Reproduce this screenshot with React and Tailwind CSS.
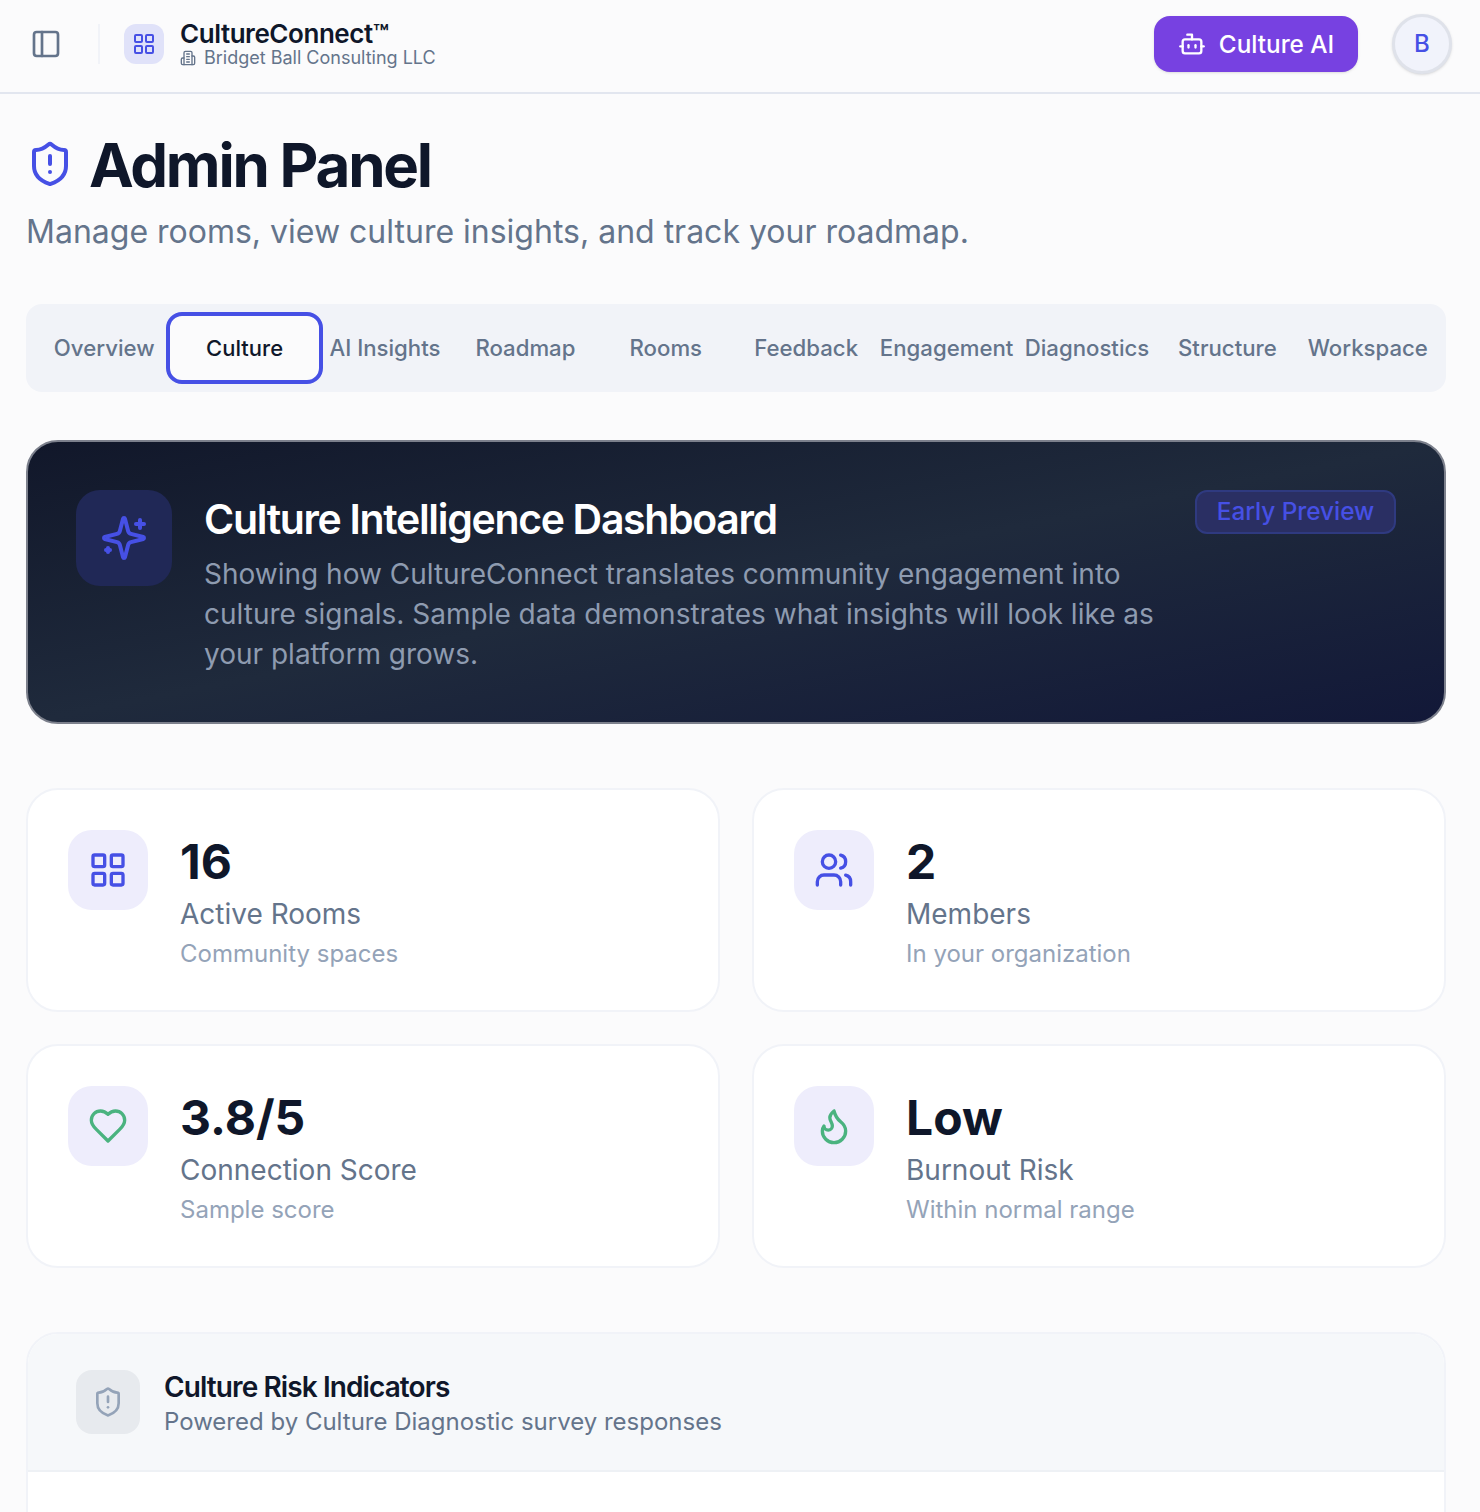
import React from "react";
import { PanelLeft, LayoutGrid, ShieldAlert, Bot, Users, Flame } from "lucide-react";

const tabs = ["Overview", "Culture", "AI Insights", "Roadmap", "Rooms", "Feedback", "Engagement", "Diagnostics", "Structure", "Workspace"];

function Ico({ className, children }) {
  return (
    <svg viewBox="0 0 24 24" fill="none" stroke="currentColor" strokeWidth="2" strokeLinecap="round" strokeLinejoin="round" className={className}>
      {children}
    </svg>
  );
}

function Sparkle({ className }) {
  return (
    <Ico className={className}>
      <path d="M9.937 15.5A2 2 0 0 0 8.5 14.063l-6.135-1.582a.5.5 0 0 1 0-.962L8.5 9.936A2 2 0 0 0 9.937 8.5l1.582-6.135a.5.5 0 0 1 .963 0L14.063 8.5A2 2 0 0 0 15.5 9.937l6.135 1.581a.5.5 0 0 1 0 .964L15.5 14.063a2 2 0 0 0-1.437 1.437l-1.582 6.135a.5.5 0 0 1-.963 0z" />
      <path d="M20 3v4" />
      <path d="M22 5h-4" />
      <path d="M4 17v2" />
      <path d="M5 18H3" />
    </Ico>
  );
}

function HeartIcon({ className }) {
  return (
    <Ico className={className}>
      <path d="M19 14c1.49-1.46 3-3.21 3-5.5A5.5 5.5 0 0 0 16.5 3c-1.76 0-3 .5-4.5 2-1.5-1.5-2.74-2-4.5-2A5.5 5.5 0 0 0 2 8.5c0 2.3 1.5 4.05 3 5.5l7 7Z" />
    </Ico>
  );
}

function BuildingIcon({ className }) {
  return (
    <Ico className={className}>
      <path d="M6 22V4a2 2 0 0 1 2-2h8a2 2 0 0 1 2 2v18Z" />
      <path d="M6 12H4a2 2 0 0 0-2 2v6a2 2 0 0 0 2 2h2" />
      <path d="M18 9h2a2 2 0 0 1 2 2v9a2 2 0 0 1-2 2h-2" />
      <path d="M10 6h4" />
      <path d="M10 10h4" />
      <path d="M10 14h4" />
      <path d="M10 18h4" />
    </Ico>
  );
}

function StatCard({ icon, value, label, sub }) {
  return (
    <div className="flex h-[224px] gap-8 rounded-[32px] border-2 border-[#f1f3f8] bg-white p-10">
      <div className="flex h-20 w-20 shrink-0 items-center justify-center rounded-3xl bg-[#eeedfc]">{icon}</div>
      <div className="flex flex-col">
        <div className="h-[64px] text-[48px] leading-[64px] font-bold text-[#0f172a]">{value}</div>
        <div className="text-[28px] leading-[41px] text-[#64748b]">{label}</div>
        <div className="text-[24px] leading-[38px] text-[#94a3b8]">{sub}</div>
      </div>
    </div>
  );
}

export default function App() {
  return (
    <div className="h-[1512px] overflow-hidden bg-[#fbfbfc] font-['Inter',sans-serif]">
      <header className="flex h-[94px] items-center justify-between border-b-2 border-[#e2e6ef] pr-7 pb-1 pl-[30px]">
        <div className="flex items-center">
          <PanelLeft className="h-8 w-8 text-[#64748b]" />
          <div className="mr-6 ml-9 h-10 w-0.5 bg-[#f1f3f8]" />
          <div className="flex h-10 w-10 items-center justify-center rounded-xl bg-[#e0e2f9]">
            <LayoutGrid className="h-6 w-6 text-[#4650e5]" />
          </div>
          <div className="ml-4 flex flex-col">
            <div className="text-[26px] leading-[28px] font-semibold tracking-[-0.45px] text-[#0f172a]">CultureConnect™</div>
            <div className="flex items-center gap-2 text-[18px] leading-[20px] text-[#64748b]">
              <BuildingIcon className="h-4 w-4" />
              Bridget Ball Consulting LLC
            </div>
          </div>
        </div>
        <div className="flex items-center gap-[34px]">
          <button className="flex h-14 w-[204px] items-center justify-center gap-[13px] rounded-2xl bg-[#7741e1] text-[24.3px] font-medium text-white shadow-sm">
            <Bot className="h-7 w-7" />
            Culture AI
          </button>
          <div className="flex h-[60px] w-[60px] items-center justify-center rounded-full border-[3px] border-[#dfe2ea] bg-[#f1f3fb] text-[24px] font-medium text-[#4650e5] shadow-sm">B</div>
        </div>
      </header>

      <main className="pr-[34px] pl-[26px]">
        <div className="mt-9 flex items-center gap-[15px]">
          <ShieldAlert className="mb-0.5 h-12 w-12 text-[#4650e5]" />
          <h1 className="text-[60px] leading-[70px] font-bold tracking-[-2.2px] text-[#0f172a]">Admin Panel</h1>
        </div>
        <p className="mt-3 text-[32px] leading-[40px] text-[#64748b]">Manage rooms, view culture insights, and track your roadmap.</p>

        <nav className="mt-[52px] grid h-[88px] grid-cols-10 rounded-2xl bg-[#f1f3f8] p-2">
          {tabs.map((t) =>
            t === "Culture" ? (
              <div key={t} className="z-10 mx-[-8px] flex items-center justify-center rounded-2xl border-4 border-[#4650e5] bg-[#fbfbfc] text-[22px] font-medium text-[#0f172a]">{t}</div>
            ) : (
              <div key={t} className="flex items-center justify-center whitespace-nowrap text-[22.2px] font-medium text-[#64748b]">{t}</div>
            )
          )}
        </nav>

        <section className="mt-12 flex h-[284px] items-start gap-8 rounded-[32px] border-2 border-[#7c808c] bg-[linear-gradient(to_bottom_right,#11172a_0%,#1f2a3c_50%,#121838_100%)] p-12">
          <div className="flex h-24 w-24 shrink-0 items-center justify-center rounded-3xl bg-[#202856]">
            <Sparkle className="h-12 w-12 text-[#4650e5]" />
          </div>
          <div className="flex-1">
            <h2 className="text-[41px] leading-[58px] font-semibold tracking-[-1.33px] text-white">Culture Intelligence Dashboard</h2>
            <p className="mt-[6px] text-[28px] leading-[40px] text-[#8e9bb0]">Showing how CultureConnect translates community engagement into culture signals. Sample data demonstrates what insights will look like as your platform grows.</p>
          </div>
          <div className="flex h-11 w-[201px] shrink-0 items-center justify-center rounded-xl border-2 border-[#2f3a80] bg-[#2a2f63] pb-0.5 text-[24.3px] font-medium text-[#4650e5]">Early Preview</div>
        </section>

        <div className="mt-16 grid grid-cols-2 gap-8">
          <StatCard icon={<LayoutGrid className="h-10 w-10 text-[#4650e5]" />} value="16" label="Active Rooms" sub="Community spaces" />
          <StatCard icon={<Users className="h-10 w-10 text-[#4650e5]" />} value="2" label="Members" sub="In your organization" />
          <StatCard icon={<HeartIcon className="h-10 w-10 text-[#4ab37f]" />} value="3.8/5" label="Connection Score" sub="Sample score" />
          <StatCard icon={<Flame className="h-10 w-10 text-[#4ab37f]" />} value="Low" label="Burnout Risk" sub="Within normal range" />
        </div>

        <section className="mt-16 overflow-hidden rounded-[32px] border-2 border-[#f1f3f8] bg-white">
          <div className="flex h-[138px] items-center gap-6 border-b-2 border-[#eef1f5] bg-[#f6f8fa] pl-12">
            <div className="flex h-16 w-16 items-center justify-center rounded-2xl bg-[#e7eaee]">
              <ShieldAlert className="h-8 w-8 text-[#94a3b8]" />
            </div>
            <div className="flex flex-col pt-1">
              <div className="text-[28px] leading-[36px] font-semibold tracking-[-0.9px] text-[#0f172a]">Culture Risk Indicators</div>
              <div className="text-[24px] leading-[34px] text-[#64748b]">Powered by Culture Diagnostic survey responses</div>
            </div>
          </div>
          <div className="h-24" />
        </section>
      </main>
    </div>
  );
}
